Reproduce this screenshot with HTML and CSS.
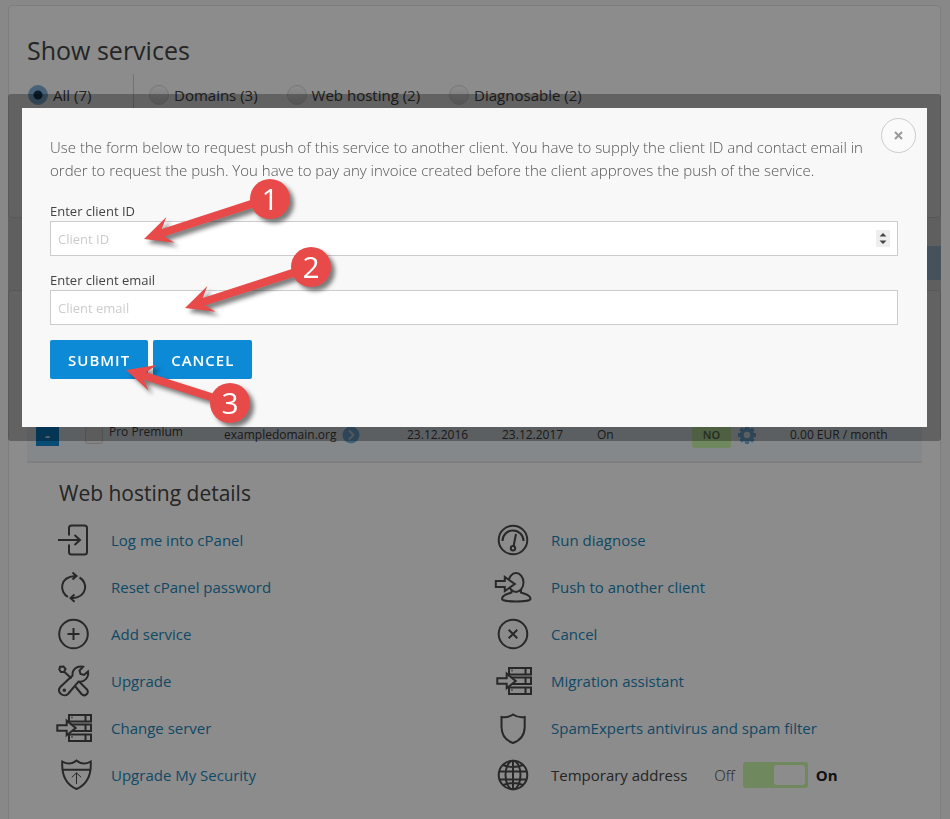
FILE: index.html
```html
<!DOCTYPE html>
<html lang="en">
<head>
    <meta charset="UTF-8">
    <meta name="viewport" content="width=device-width, initial-scale=1.0">
    <title>Show services</title>
    <link rel="stylesheet" href="styles.css">
</head>
<body>
    <section class="card filter-card">
        <h1>Show services</h1>
        <div class="filters">
            <label class="filter filter-all"><input type="radio" name="filter" checked>All (7)</label>
            <div class="filter-group">
                <label class="filter"><input type="radio" name="filter">Domains (3)</label>
                <label class="filter"><input type="radio" name="filter">Web hosting (2)</label>
                <label class="filter"><input type="radio" name="filter">Diagnosable (2)</label>
            </div>
        </div>
    </section>

    <div class="bar"></div>

    <section class="card services-card">
        <table class="services">
            <colgroup>
                <col class="col-toggle">
                <col class="col-name">
                <col class="col-domain">
                <col class="col-date">
                <col class="col-date">
                <col class="col-date">
                <col class="col-status">
                <col>
            </colgroup>
            <tbody>
                <tr>
                    <td><button type="button" class="collapse">-</button></td>
                    <td>
                        <label class="service-name"><input type="checkbox"><span>Pro Premium</span></label>
                    </td>
                    <td>
                        <span class="with-icon">exampledomain.org
                            <svg width="18" height="18" viewBox="0 0 18 18">
                                <circle cx="9" cy="9" r="8.5" fill="#76b4e0"/>
                                <path d="M7 4.5L11.5 9L7 13.5" fill="none" stroke="#d5e6f2" stroke-width="2"/>
                            </svg>
                        </span>
                    </td>
                    <td>23.12.2016</td>
                    <td>23.12.2017</td>
                    <td>On</td>
                    <td>
                        <span class="with-icon"><span class="badge">NO</span>
                            <svg width="20" height="20" viewBox="0 0 20 20">
                                <circle cx="10" cy="10" r="5.2" fill="none" stroke="#76b4e0" stroke-width="4"/>
                                <g stroke="#76b4e0" stroke-width="4">
                                    <path d="M10 1v3M10 16v3M1 10h3M16 10h3M3.6 3.6l2 2M14.4 14.4l2 2M3.6 16.4l2-2M14.4 5.6l2-2"/>
                                </g>
                            </svg>
                        </span>
                    </td>
                    <td>0.00 EUR / month</td>
                </tr>
            </tbody>
        </table>

        <h2>Web hosting details</h2>
        <div class="details">
            <div class="detail">
                <svg class="icon" viewBox="0 0 36 36">
                    <path d="M14 13.5V6a2.5 2.5 0 0 1 2.5-2.5h13A2.5 2.5 0 0 1 32 6v24a2.5 2.5 0 0 1-2.5 2.5h-13A2.5 2.5 0 0 1 14 30v-7.5M3 18h22M19.5 13l5.5 5l-5.5 5"/>
                </svg>
                <a href="#">Log me into cPanel</a>
            </div>
            <div class="detail">
                <svg class="icon" viewBox="0 0 36 36">
                    <circle cx="18" cy="18" r="14.3"/>
                    <path d="M7.5 19a10.5 10.5 0 1 1 21 0M21 12l-2.4 12"/>
                    <circle cx="18" cy="26.3" r="2.2"/>
                </svg>
                <a href="#">Run diagnose</a>
            </div>
            <div class="detail">
                <svg class="icon" viewBox="0 0 36 36">
                    <path d="M13 28C4 23 4.5 8 20 7M24.5 8.5C33 13 33 28 17 29.3M17.5 3.5L21.5 7L17.5 10.5M19.5 25.5L15.5 29L19.5 32.8"/>
                </svg>
                <a href="#">Reset cPanel password</a>
            </div>
            <div class="detail">
                <svg class="icon" viewBox="0 0 36 36">
                    <ellipse cx="21" cy="13.5" rx="7.5" ry="9.5"/>
                    <path d="M16.5 21v2.5C13 25 7 25 7 30c0 1.5 6 2.5 14 2.5s14.5-1 14.5-2.5c0-5-6-5-9.5-6.5V21"/>
                    <path class="arrow" d="M.8 12h9V8l10 7l-10 7v-4h-9z"/>
                </svg>
                <a href="#">Push to another client</a>
            </div>
            <div class="detail">
                <svg class="icon" viewBox="0 0 36 36">
                    <circle cx="18.5" cy="18" r="14.3"/>
                    <path d="M12.5 18h12M18.5 12v12"/>
                </svg>
                <a href="#">Add service</a>
            </div>
            <div class="detail">
                <svg class="icon" viewBox="0 0 36 36">
                    <circle cx="18" cy="18" r="14.3"/>
                    <path d="M13.7 13.7l8.6 8.6M22.3 13.7l-8.6 8.6"/>
                </svg>
                <a href="#">Cancel</a>
            </div>
            <div class="detail">
                <svg class="icon" viewBox="0 0 36 36">
                    <path d="M5 3.8l3.5-.3L10.5 6L9 9L6 9L4.3 6.5zM9.5 9l7 6.5"/>
                    <path d="M5.3 24L17.5 12.5C17 6.5 21.5 2.5 28 3.8L24.5 7.5L25.5 11L29 12L33 8.5C34 14.5 29.5 19.5 23.5 18.5L13 31C9 35 .8 29.5 5.3 24z"/>
                    <circle cx="9.3" cy="27.3" r=".8"/>
                    <path d="M19.5 22.5l7 8.5c3 3.5 8.5-1 5.5-4.5l-7.5-7.5"/>
                </svg>
                <a href="#">Upgrade</a>
            </div>
            <div class="detail">
                <svg class="icon" viewBox="0 0 36 36">
                    <path d="M14 5H36v6.5H14zM14 14.5H36V21H14zM14 24.5H36V31H14zM30.5 5v6.5M30.5 14.5V21M30.5 24.5V31M16.5 7.5h1M16.5 27h1"/>
                    <path class="arrow" d="M2.3 15.2h9.4v-4.5l9 7.3l-9 7.2v-4.5H2.3z"/>
                </svg>
                <a href="#">Migration assistant</a>
            </div>
            <div class="detail">
                <svg class="icon" viewBox="0 0 36 36">
                    <path d="M14 5H36v6.5H14zM14 14.5H36V21H14zM14 24.5H36V31H14zM30.5 5v6.5M30.5 14.5V21M30.5 24.5V31M16.5 7.5h1M16.5 27h1"/>
                    <path class="arrow" d="M2.3 15.2h9.4v-4.5l9 7.3l-9 7.2v-4.5H2.3z"/>
                </svg>
                <a href="#">Change server</a>
            </div>
            <div class="detail">
                <svg class="icon" viewBox="0 0 36 36">
                    <path d="M6.5 7Q13 8 18 4.5Q23 8 29.7 7V17Q29.5 29 18 33Q6.7 29 6.5 17z"/>
                </svg>
                <a href="#">SpamExperts antivirus and spam filter</a>
            </div>
            <div class="detail">
                <svg class="icon" viewBox="0 0 36 36">
                    <path d="M7.3 4.5Q15 9 21.5 3.5Q28 9 35.7 4.5C36.5 17 33 27 21.5 32C10 27 6.5 17 7.3 4.5zM7.5 12.8h28"/>
                    <path class="thin" d="M21.5 27V15.8M16.8 20.3l4.7-4.5l4.7 4.5"/>
                </svg>
                <a href="#">Upgrade My Security</a>
            </div>
            <div class="detail">
                <svg class="icon" viewBox="0 0 36 36">
                    <circle cx="18" cy="18" r="14.3"/>
                    <ellipse cx="18" cy="18" rx="7.5" ry="14.3"/>
                    <path d="M18 3.7v28.6M4 14.5h28M4.5 22.5h27M8 8Q18 12 28 8M8 28Q18 24 28 28"/>
                </svg>
                <label for="temporary">Temporary address</label>
                <span class="switch">
                    <span class="off">Off</span>
                    <input type="checkbox" id="temporary" checked>
                    <strong>On</strong>
                </span>
            </div>
        </div>
    </section>

    <div class="overlay"></div>
    <div class="modal" role="dialog">
        <button type="button" class="close" aria-label="Close">
            <svg width="9" height="9" viewBox="0 0 9 9">
                <path d="M1 1l7 7M8 1l-7 7" stroke="#999" stroke-width="2"/>
            </svg>
        </button>
        <form>
            <p>Use the form below to request push of this service to another client. You have to supply the client ID and contact email in order to request the push. You have to pay any invoice created before the client approves the push of the service.</p>
            <div class="field">
                <label for="clientId">Enter client ID</label>
                <input type="number" id="clientId" placeholder="Client ID">
                <span class="spinner">
                    <svg width="14" height="17" viewBox="0 0 14 17">
                        <path d="M3.5 6.5L7 3l3.5 3.5zM3.5 10.5L7 14l3.5-3.5z" fill="#444"/>
                    </svg>
                </span>
            </div>
            <div class="field">
                <label for="clientEmail">Enter client email</label>
                <input type="email" id="clientEmail" placeholder="Client email">
            </div>
            <div class="buttons">
                <button type="submit" class="btn">SUBMIT</button>
                <button type="button" class="btn">CANCEL</button>
            </div>
        </form>

        <!-- numbered steps -->
        <svg class="steps" viewBox="120 175 240 260">
            <g>
                <path transform="translate(144 239) rotate(-18)" d="M0 0L28-14L20-4H120V4H20L28 13z"/>
                <circle cx="270" cy="199" r="20"/>
            </g>
            <g>
                <path transform="translate(185 308) rotate(-18)" d="M0 0L28-14L20-4H120V4H20L28 13z"/>
                <circle cx="311" cy="267" r="20"/>
            </g>
            <g>
                <path transform="translate(126 370) rotate(17.6)" d="M0 0L28-14L20-4H100V4H20L28 13z"/>
                <circle cx="230" cy="403" r="20"/>
            </g>
            <text x="270" y="210">1</text>
            <text x="311" y="278">2</text>
            <text x="230" y="414">3</text>
        </svg>
    </div>
</body>
</html>
```
FILE: styles.css
```css
* {
    box-sizing: border-box;
}

body {
    font-family: "Open Sans", sans-serif;
    font-size: 15px;
    color: #444;
    background-color: #f7f7f7;
    margin: 0;
    padding: 5px 9px 0 8px;
    min-height: 100vh;
    display: flex;
    flex-direction: column;
    overflow: hidden;
}

h1, h2 {
    font-weight: 400;
    margin: 0;
}

h1 {
    font-size: 25px;
    line-height: 36px;
}

h2 {
    font-size: 21px;
    line-height: 30px;
    margin: 15px 0 8px 50px;
}

a {
    color: #1c86b8;
    text-decoration: none;
}

.card {
    background: #fff;
    border: 1px solid #e6e6e6;
    border-radius: 4px;
}

.filter-card {
    padding: 26px 18px 101px;
}

.filters {
    display: flex;
    margin-top: 6px;
}

.filter {
    display: flex;
    align-items: center;
    gap: 5px;
    line-height: 22px;
}

.filter-all {
    width: 106px;
    padding-left: 1px;
}

.filter-group {
    display: flex;
    gap: 29px;
    padding: 10px 0 10px 15px;
    border-left: 1px solid #d0d0d0;
}

.filter input {
    appearance: none;
    width: 20px;
    height: 20px;
    margin: 0;
    border: 1px solid #d8d8d8;
    border-radius: 50%;
    background: linear-gradient(#fff, #ddd);
}

.filter input:checked {
    border-color: #8fb6d0;
    background: radial-gradient(circle, #14344c 4px, #7fb2d8 5px);
}

.bar {
    height: 34px;
    margin: 28px 0 10px 18px;
    background: #b3d4ec;
}

.services-card {
    flex: 1;
    padding: 117px 0 0;
    border-bottom: none;
    border-radius: 4px 4px 0 0;
}

.services {
    width: calc(100% - 36px);
    margin: 0 18px;
    table-layout: fixed;
    border-collapse: collapse;
    font-size: 12px;
}

.services tr {
    height: 54px;
    background: #f0f8fd;
    border-bottom: 2px solid #e4e8ea;
}

.services td {
    padding: 0 0 0 9px;
    white-space: nowrap;
}

.col-toggle {
    width: 49px;
}

.col-name {
    width: 139px;
}

.col-domain {
    width: 183px;
}

.col-date {
    width: 95px;
}

.col-status {
    width: 98px;
}

.collapse {
    display: block;
    width: 23px;
    height: 23px;
    padding: 0;
    border: none;
    background: #0c8ad6;
    color: #fff;
    font: 700 15px "Open Sans", sans-serif;
}

.service-name {
    display: flex;
    align-items: center;
    gap: 6px;
}

.service-name span {
    padding-bottom: 6px;
}

.service-name input {
    appearance: none;
    width: 18px;
    height: 18px;
    margin: 0;
    border: 1px solid #d0d0d0;
    border-radius: 3px;
    background: #f0f0f0;
}

.with-icon {
    display: flex;
    align-items: center;
    gap: 6px;
}

.badge {
    width: 39px;
    border-radius: 3px;
    background: #caf7ab;
    color: #5d7052;
    font-size: 11px;
    font-weight: 600;
    line-height: 26px;
    text-align: center;
}

.details {
    display: grid;
    grid-template-columns: 1fr 1fr;
    grid-auto-rows: 47px;
    padding: 0 5px 0 46px;
}

.detail {
    display: flex;
    align-items: center;
}

.icon {
    width: 36px;
    height: 36px;
    margin-right: 20px;
    overflow: visible;
    fill: none;
    stroke: #4a4a4a;
    stroke-width: 2;
}

.icon .arrow {
    fill: #fff;
}

.icon .thin {
    stroke-width: 1;
}

.switch {
    display: flex;
    align-items: center;
    gap: 8px;
    margin-left: 27px;
}

.switch .off {
    font-weight: 300;
}

.switch input {
    appearance: none;
    width: 65px;
    height: 26px;
    margin: 0;
    padding: 3px;
    border-radius: 3px;
    background: #caf7ab;
}

.switch input::before {
    content: "";
    display: block;
    width: 31px;
    height: 20px;
    margin-left: auto;
    border-radius: 3px;
    background: #fff;
}

.switch strong {
    color: #222;
}

.overlay {
    position: fixed;
    inset: 0;
    background: rgba(0, 0, 0, 0.45);
}

.modal {
    position: fixed;
    top: 94px;
    left: 8px;
    right: 9px;
    padding: 28px 29px 48px 28px;
    border: 14px solid rgba(0, 0, 0, 0.3);
    border-radius: 3px;
    background: #f8f8f8;
    background-clip: padding-box;
}

.modal p {
    margin: 0 0 20px;
    color: #555;
    font-weight: 300;
    line-height: 23px;
}

.close {
    position: absolute;
    top: 10px;
    right: 11px;
    width: 35px;
    height: 35px;
    padding: 0;
    border: 1px solid #ccc;
    border-radius: 50%;
    background: #fafafa;
}

.field {
    position: relative;
    margin-bottom: 15px;
}

.field label {
    display: block;
    font-size: 13px;
    line-height: 19px;
}

.field input {
    display: block;
    appearance: textfield;
    width: 100%;
    height: 35px;
    padding: 0 7px;
    border: 1px solid #ccc;
    background: #fff;
    font: 13px "Open Sans", sans-serif;
}

.field input::placeholder {
    color: #ccc;
}

.spinner {
    position: absolute;
    right: 8px;
    bottom: 9px;
    height: 17px;
    background: #eee;
}

.spinner svg {
    display: block;
}

.buttons {
    display: flex;
    gap: 5px;
}

.btn {
    height: 39px;
    padding: 0 18px;
    border: none;
    border-radius: 2px;
    background: #0c8ad6;
    color: #fff;
    font: 600 15px "Open Sans", sans-serif;
    letter-spacing: 1px;
}

.steps {
    position: absolute;
    top: 67px;
    left: 98px;
    width: 240px;
    height: 260px;
    pointer-events: none;
    fill: #e84a4a;
}

.steps g {
    filter: drop-shadow(4px 4px 2px rgba(0, 0, 0, 0.5));
}

.steps text {
    fill: #fff;
    font-size: 30px;
    text-anchor: middle;
}
```
